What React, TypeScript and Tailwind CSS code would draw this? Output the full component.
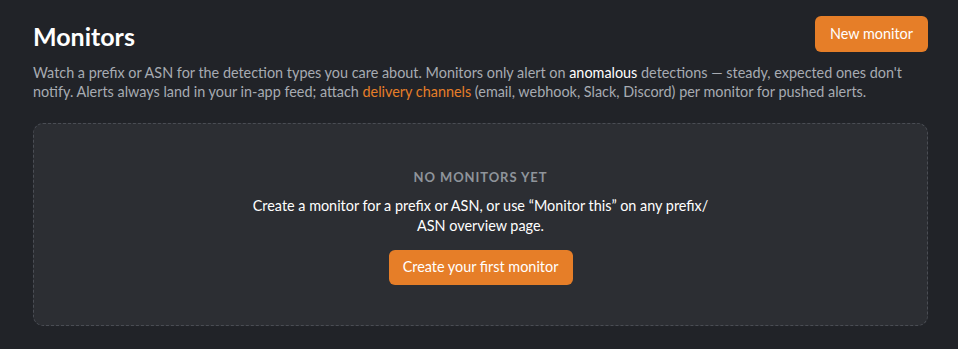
export default function App() {
  return (
    <div
      className="min-h-[349px] w-full bg-[#212328] pl-[33px] pr-[30px] pt-4 pb-6"
      style={{ fontFamily: 'Lato, "Noto Sans", sans-serif' }}
    >
      {/* Header */}
      <div className="flex items-start justify-between">
        <h1 className="mt-[5px] text-[25px] font-bold leading-[30px] text-white">Monitors</h1>
        <button className="h-9 w-[113px] rounded-md bg-[#e67e28] text-[14.4px] text-white">
          New monitor
        </button>
      </div>
      <p className="mt-[11px] text-[14.4px] leading-[19px] text-[#a7abb2]">
        Watch a prefix or ASN for the detection types you care about. Monitors only alert on{' '}
        <span className="text-white">anomalous</span> detections — steady, expected ones don't
        notify. Alerts always land in your in-app feed; attach{' '}
        <span className="text-[#e67e28]">delivery channels</span> (email, webhook, Slack, Discord)
        per monitor for pushed alerts.
      </p>

      {/* Empty state */}
      <div className="mt-[22px] flex h-[203px] flex-col items-center justify-center rounded-[10px] border border-dashed border-[#4a4d54] bg-[#2c2e33] pt-1">
        <div className="text-[13px] font-bold uppercase tracking-[0.07em] text-[#8f949b]">
          No monitors yet
        </div>
        <p className="mt-[8px] w-[470px] text-center text-[14.4px] leading-[20px] text-white">
          Create a monitor for a prefix or ASN, or use “Monitor this” on any prefix/
          <wbr />
          ASN overview page.
        </p>
        <button className="mt-[14px] h-[35px] w-[184px] rounded-md bg-[#e67e28] text-[14.4px] text-white">
          Create your first monitor
        </button>
      </div>
    </div>
  );
}
